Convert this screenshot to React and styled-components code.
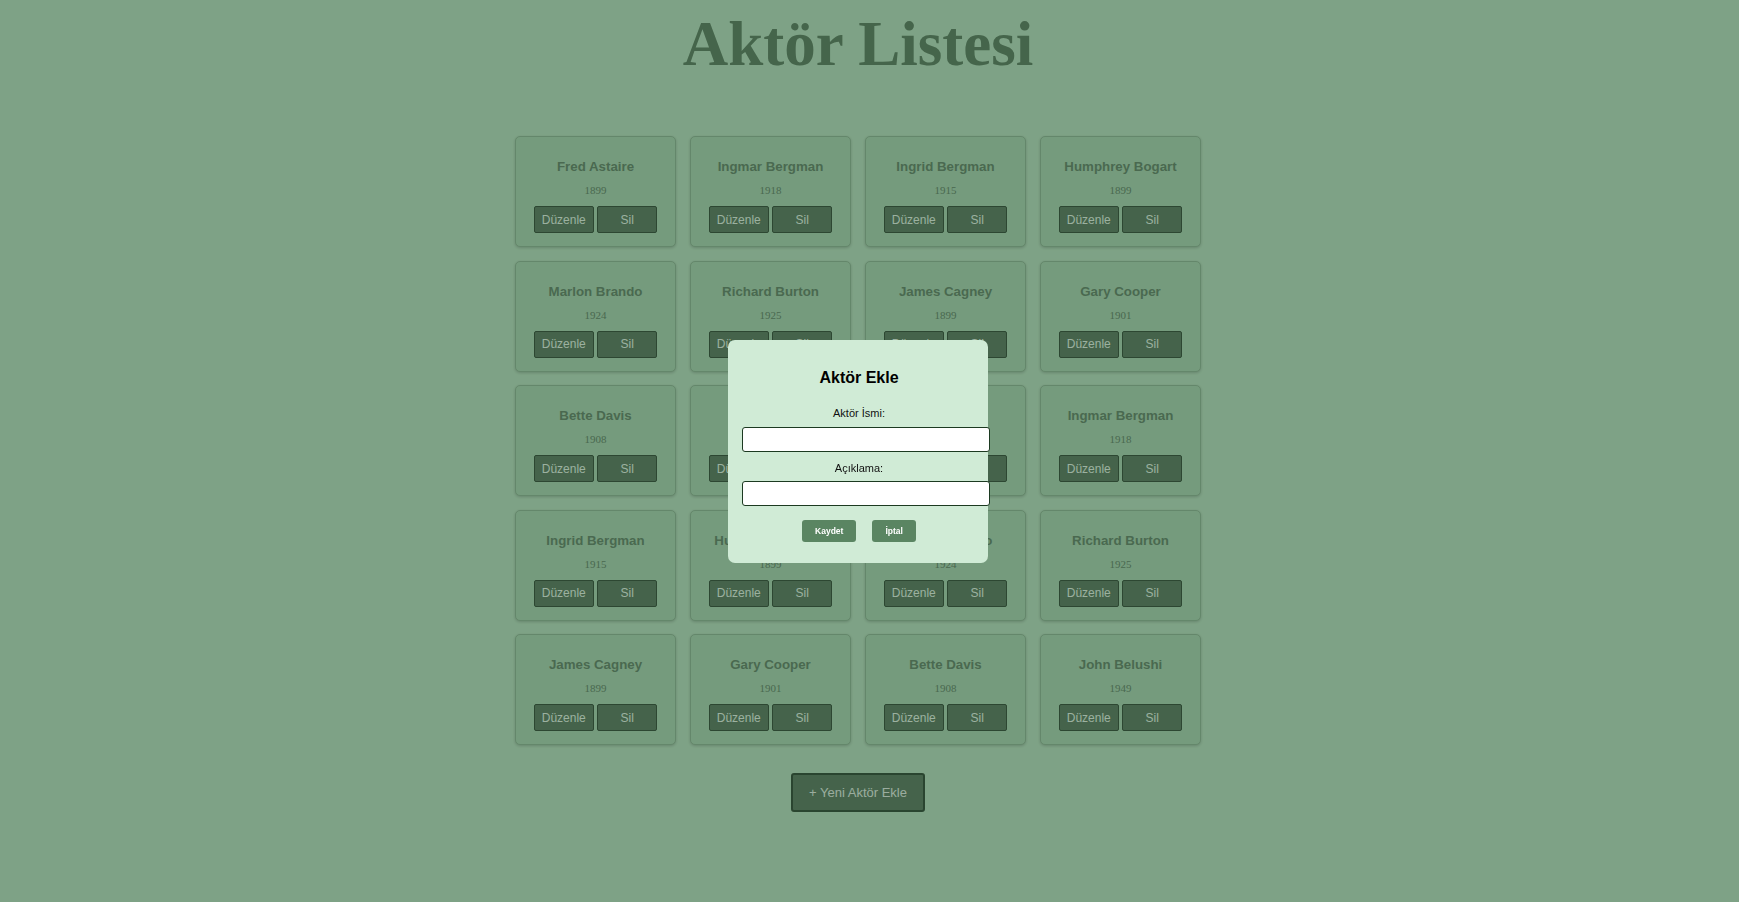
import React from "react";
import styled, { createGlobalStyle } from "styled-components";

const GlobalStyle = createGlobalStyle`
  html, body {
    margin: 0;
    padding: 0;
  }
  body {
    background: #a9d9b3;
    font-family: "Liberation Serif", "Times New Roman", serif;
    min-height: 100vh;
  }
`;

const Page = styled.div`
  display: flex;
  flex-direction: column;
  align-items: center;
  padding: 9px 23px 0 0;
  min-height: 100vh;
  box-sizing: border-box;
`;

const Title = styled.h1`
  margin: 0;
  font-family: "Liberation Serif", "Times New Roman", serif;
  font-weight: bold;
  font-size: 63px;
  line-height: 70px;
  color: #5d8765;
`;

const Grid = styled.div`
  margin-top: 57px;
  display: grid;
  grid-template-columns: repeat(4, 161px);
  column-gap: 14px;
  row-gap: 13.5px;
`;

const Card = styled.div`
  box-sizing: border-box;
  display: flex;
  flex-direction: column;
  align-items: center;
  padding: 22px 0 13px;
  background: #9dcfa7;
  border: 1px solid #86b58f;
  border-radius: 5px;
  box-shadow: 0 1px 3px rgba(0, 0, 0, 0.18);
`;

const Name = styled.h3`
  margin: 0;
  font-family: "Liberation Sans", Arial, sans-serif;
  font-weight: bold;
  font-size: 13.3px;
  line-height: 16px;
  color: #638d6b;
`;

const Year = styled.p`
  margin: 9px 0 0;
  font-family: "Liberation Serif", "Times New Roman", serif;
  font-size: 11px;
  line-height: 13px;
  color: #628c6a;
`;

const Actions = styled.div`
  display: flex;
  gap: 3.5px;
  margin-top: 9px;
`;

const CardButton = styled.button`
  box-sizing: border-box;
  width: 60px;
  height: 27px;
  padding: 0;
  background: #5c8564;
  border: 1px solid #3c5f43;
  border-radius: 2px;
  color: #d0ebd6;
  font-family: "Liberation Sans", Arial, sans-serif;
  font-size: 12px;
  cursor: pointer;
`;

const AddButton = styled.button`
  margin-top: 28px;
  padding: 10px 16px;
  background: #5c8564;
  border: 2px solid #395c40;
  border-radius: 3px;
  color: #cfe6d4;
  font-family: "Liberation Sans", Arial, sans-serif;
  font-size: 13px;
  line-height: 15px;
  cursor: pointer;
`;

const Overlay = styled.div`
  position: fixed;
  inset: 0;
  box-sizing: border-box;
  padding-right: 23px;
  display: flex;
  align-items: center;
  justify-content: center;
  background: rgba(0, 0, 0, 0.25);
`;

const Modal = styled.div`
  box-sizing: border-box;
  width: 260px;
  padding: 28px 12px 21px 14px;
  background: #d0ebd6;
  border-radius: 7px;
  display: flex;
  flex-direction: column;
  font-family: "Liberation Sans", Arial, sans-serif;
`;

const ModalTitle = styled.h3`
  margin: 0;
  text-align: center;
  font-size: 16px;
  line-height: 20px;
  font-weight: bold;
  color: #000;
`;

const Label = styled.label`
  display: block;
  margin-top: ${(p) => p.$gap}px;
  text-align: center;
  font-size: 11px;
  line-height: 13px;
  color: #111;
`;

const Input = styled.input`
  display: block;
  width: 100%;
  height: 23px;
  margin-top: ${(p) => p.$gap}px;
  padding: 0 6px;
  border: 1px solid #1c3a21;
  border-radius: 3px;
  background: #fff;
  box-sizing: content-box;
  font-family: inherit;
  font-size: 12px;
  outline: none;
`;

const ModalActions = styled.div`
  display: flex;
  justify-content: center;
  gap: 16px;
  margin-top: 14px;
`;

const ModalButton = styled.button`
  height: 22px;
  padding: 0 13px;
  background: #5a8562;
  border: none;
  border-radius: 3px;
  color: #fff;
  font-family: "Liberation Sans", Arial, sans-serif;
  font-weight: bold;
  font-size: 8.5px;
  cursor: pointer;
`;

const base = [
  ["Fred Astaire", 1899],
  ["Ingmar Bergman", 1918],
  ["Ingrid Bergman", 1915],
  ["Humphrey Bogart", 1899],
  ["Marlon Brando", 1924],
  ["Richard Burton", 1925],
  ["James Cagney", 1899],
  ["Gary Cooper", 1901],
  ["Bette Davis", 1908],
  ["John Belushi", 1949],
];
const actors = [...base, ...base];

export default function App() {
  return (
    <>
      <GlobalStyle />
      <Page>
        <Title>Aktör Listesi</Title>
        <Grid>
          {actors.map(([name, year], i) => (
            <Card key={i}>
              <Name>{name}</Name>
              <Year>{year}</Year>
              <Actions>
                <CardButton>Düzenle</CardButton>
                <CardButton>Sil</CardButton>
              </Actions>
            </Card>
          ))}
        </Grid>
        <AddButton>+ Yeni Aktör Ekle</AddButton>
      </Page>
      <Overlay>
        <Modal>
          <ModalTitle>Aktör Ekle</ModalTitle>
          <Label $gap={19}>Aktör İsmi:</Label>
          <Input $gap={7} />
          <Label $gap={10}>Açıklama:</Label>
          <Input $gap={6} />
          <ModalActions>
            <ModalButton>Kaydet</ModalButton>
            <ModalButton>İptal</ModalButton>
          </ModalActions>
        </Modal>
      </Overlay>
    </>
  );
}
